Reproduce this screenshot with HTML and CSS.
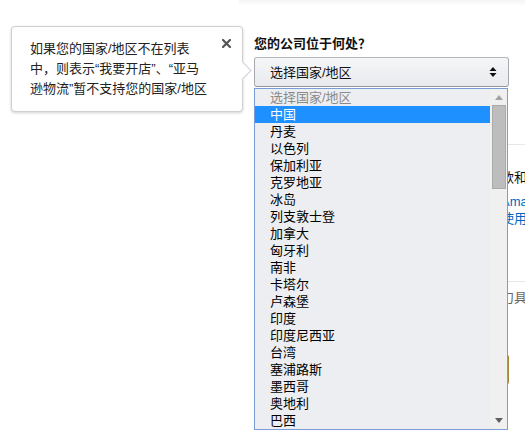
FILE: index.html
```html
<!DOCTYPE html>
<html>
<head>
    <title>卖家注册 - 选择国家/地区</title>
    <link rel="stylesheet" href="styles.css">
</head>
<body>
    <div class="page">
        <div class="tip">
            <p class="tip-text">如果您的国家/地区不在列表中，则表示“我要开店”、“亚马逊物流”暂不支持您的国家/地区</p>
            <button class="tip-close" aria-label="关闭">
                <svg width="9" height="9" viewBox="0 0 9 9"><path d="M1 1L8 8M8 1L1 8" stroke="#555" stroke-width="2.2" stroke-linecap="square"/></svg>
            </button>
        </div>

        <div class="form">
            <div class="top-shade"></div>
            <h4 class="question">您的公司位于何处？</h4>
            <div class="select-wrap">
                <div class="select-btn">
                    <span>选择国家/地区</span>
                    <svg class="select-arrows" width="8" height="10" viewBox="0 0 8 10"><path d="M4 0L7.5 4H0.5Z M4 10L7.5 6H0.5Z" fill="#111"/></svg>
                </div>
                <div class="select-list">
                    <ul class="options">
                        <li class="placeholder">选择国家/地区</li>
                        <li class="active">中国</li>
                        <li>丹麦</li>
                        <li>以色列</li>
                        <li>保加利亚</li>
                        <li>克罗地亚</li>
                        <li>冰岛</li>
                        <li>列支敦士登</li>
                        <li>加拿大</li>
                        <li>匈牙利</li>
                        <li>南非</li>
                        <li>卡塔尔</li>
                        <li>卢森堡</li>
                        <li>印度</li>
                        <li>印度尼西亚</li>
                        <li>台湾</li>
                        <li>塞浦路斯</li>
                        <li>墨西哥</li>
                        <li>奥地利</li>
                        <li>巴西</li>
                    </ul>
                    <div class="scrollbar">
                        <div class="scroll-up"><svg width="8" height="5" viewBox="0 0 8 5"><path d="M4 0L8 5H0Z" fill="#a3a3a3"/></svg></div>
                        <div class="scroll-thumb"></div>
                        <div class="scroll-space"></div>
                        <div class="scroll-down"><svg width="8" height="5" viewBox="0 0 8 5"><path d="M0 0H8L4 5Z" fill="#5f5f5f"/></svg></div>
                    </div>
                </div>
            </div>

            <div class="section">
                <p class="agree">继续操作即表示您已阅读并同意亚马逊的条款和条件</p>
                <p class="links"><a href="#">亚马逊服务商业解决方案协议与卖家政策，Amazon</a><a href="#">和亚马逊物流服务条款，了解更多关于网站使用</a></p>
            </div>
            <div class="section section-last">
                <p class="note">如需帮助，请访问卖家中心的帮助页面相关刀具</p>
                <button class="primary-btn">同意并继续</button>
            </div>
        </div>
    </div>
</body>
</html>
```

FILE: styles.css
```css
html, body {
    margin: 0;
    padding: 0;
    background-color: #fff;
    overflow: hidden;
}
body {
    font-family: "Liberation Sans", Arial, "Noto Sans CJK SC", sans-serif;
    font-size: 13px;
    color: #111;
}
.page {
    display: flex;
    align-items: flex-start;
    width: 525px;
    height: 439px;
}
.tip {
    position: relative;
    display: flex;
    align-items: flex-start;
    box-sizing: border-box;
    width: 233px;
    margin: 26px 0 0 11px;
    padding: 12px 11px 12px 18px;
    background-color: #fff;
    border: 1px solid #cfcfcf;
    border-radius: 4px;
    box-shadow: 0 1px 3px rgba(0, 0, 0, 0.18);
}
.tip::after {
    content: "";
    position: absolute;
    top: 37px;
    right: -7px;
    width: 12px;
    height: 12px;
    background-color: #fff;
    border-top: 1px solid #cfcfcf;
    border-right: 1px solid #cfcfcf;
    transform: rotate(45deg);
}
.tip-text {
    width: 180px;
    margin: 0;
    line-height: 20px;
    color: #222;
}
.tip-close {
    display: flex;
    margin: 0 0 0 12px;
    padding: 0;
    border: none;
    background: none;
    cursor: pointer;
}
.form {
    position: relative;
    flex: none;
    width: 330px;
    margin-left: 11px;
    padding-top: 35px;
}
.top-shade {
    position: absolute;
    top: 0;
    left: -15px;
    right: 0;
    height: 6px;
    background: linear-gradient(to bottom, rgba(0, 0, 0, 0.045), rgba(0, 0, 0, 0));
}
.question {
    margin: 0 0 5px;
    font-size: 13px;
    line-height: 17px;
    font-weight: bold;
}
.select-wrap {
    position: relative;
    width: 255px;
}
.select-btn {
    display: flex;
    align-items: center;
    justify-content: space-between;
    box-sizing: border-box;
    height: 30px;
    padding: 0 11px 0 15px;
    background: linear-gradient(to bottom, #f5f6f8, #e8eaed);
    border: 1px solid #adb1b8;
    border-color: #b4b7bd #a6aab0 #92959b;
    border-radius: 3px;
}
.select-btn span {
    line-height: 17px;
}
.select-list {
    position: absolute;
    top: 31px;
    left: 0;
    z-index: 5;
    display: flex;
    box-sizing: border-box;
    width: 254px;
    background-color: #edeef1;
    border: 1px solid #7b9dd6;
}
.options {
    flex: 1;
    margin: 0;
    padding: 0;
    list-style: none;
}
.options li {
    height: 17px;
    padding-left: 15px;
    line-height: 17px;
    color: #000;
    white-space: nowrap;
}
.options .placeholder {
    color: #8a8a8a;
}
.options .active {
    background-color: #1e90ff;
    color: #fff;
}
.scrollbar {
    display: flex;
    flex-direction: column;
    width: 17px;
    background-color: #f0f0f0;
}
.scroll-up, .scroll-down {
    display: flex;
    align-items: center;
    justify-content: center;
}
.scroll-up {
    height: 16px;
}
.scroll-down {
    height: 17px;
}
.scroll-thumb {
    box-sizing: border-box;
    height: 84px;
    margin: 0 1px 0 2px;
    background-color: #bdbdbd;
    border: 1px solid #aaaaaa;
}
.scroll-space {
    flex: 1;
}
.section {
    margin-top: 57px;
    padding: 24px 0 54px;
    border-top: 1px solid #e7e7e7;
}
.section + .section {
    margin-top: 0;
    padding-top: 7px;
}
.section p {
    margin: 0;
    line-height: 17px;
    white-space: nowrap;
}
.links {
    margin-top: 7px !important;
}
.links a {
    display: block;
    color: #0066c0;
    text-decoration: none;
}
.note {
    color: #666;
}
.primary-btn {
    display: block;
    box-sizing: border-box;
    width: 255px;
    height: 31px;
    margin-top: 48px;
    background: linear-gradient(to bottom, #f7dfa5, #f0c14b);
    border: 1px solid #a88734;
    border-radius: 3px;
    font-family: inherit;
    font-size: 13px;
    color: #111;
}
```
